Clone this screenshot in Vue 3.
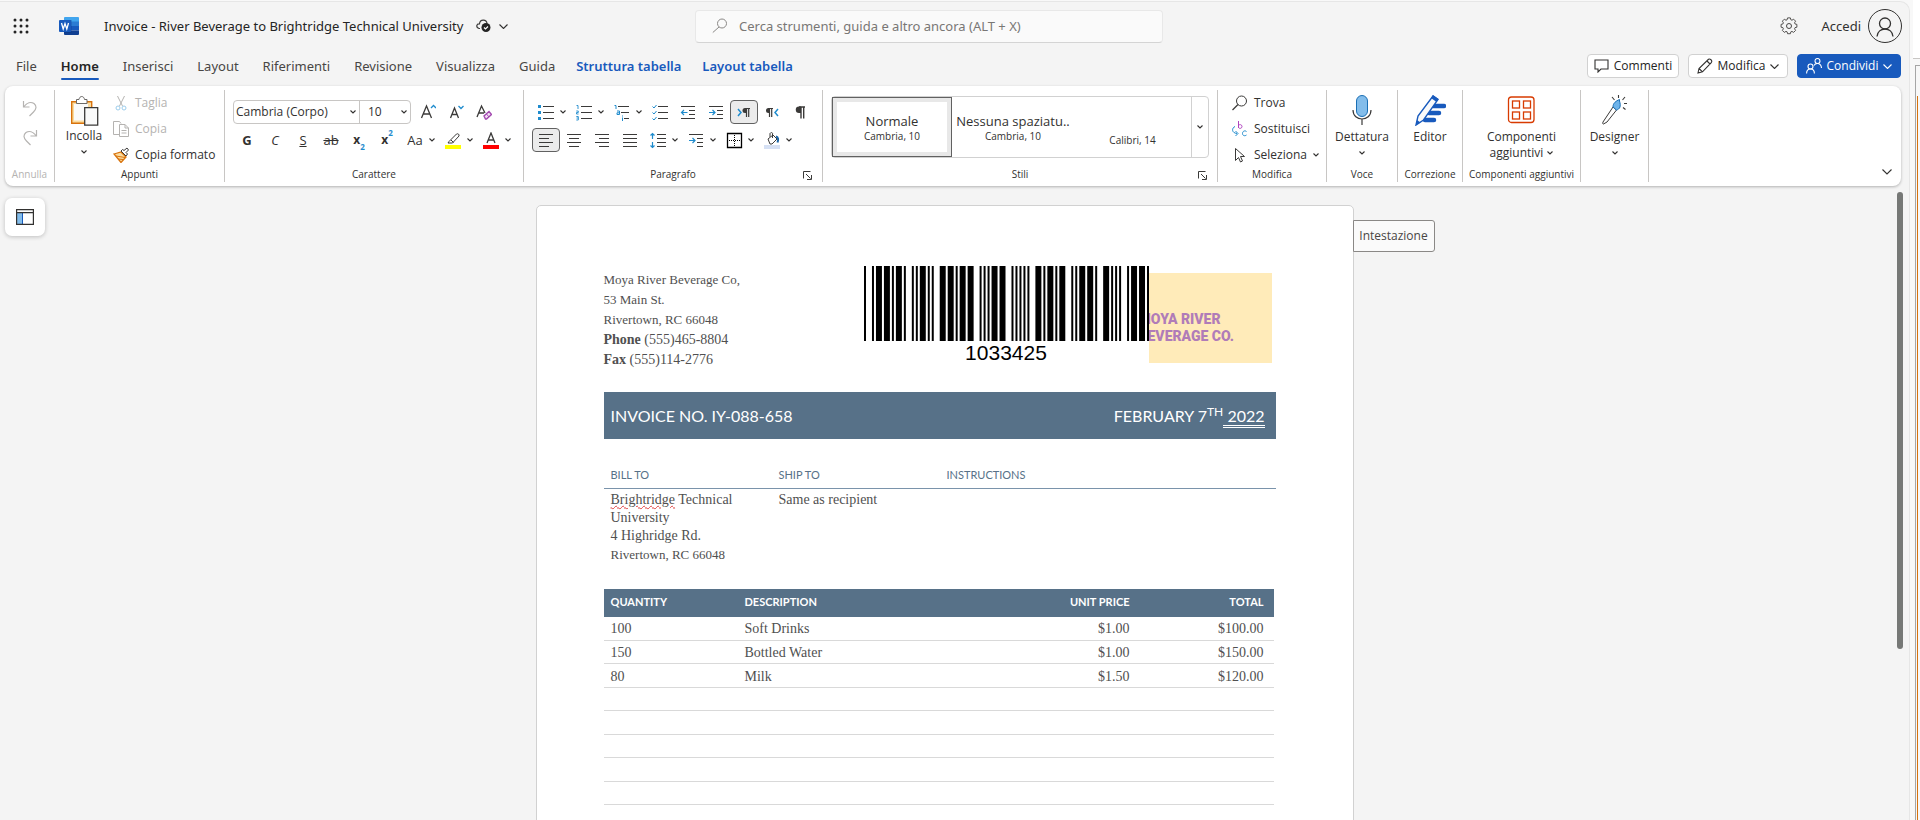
<script setup>
import { ref } from 'vue'

const ink = '#3b3a39'
const blue = '#1e8bcd'

const lines = (rows, extra = '') =>
  `<path d="${rows.map(([x1, x2, y]) => `M${x1} ${y}H${x2}`).join('')}" stroke="${ink}"/>${extra}`

const icons = {
  undo: `<path d="M1.500 1v6h6M2 6.500C5 2.500 9 1.500 12 3.500c3 2.500 2.500 5.500-.500 8.500L7.500 16" stroke="#b5b3b1" stroke-width="1.200"/>`,
  redo: `<path d="M14.500 1v6h-6M14 6.500C11 2.500 7 1.500 4 3.500c-3 2.500-2.500 5.500.500 8.500L8.500 16" stroke="#b5b3b1" stroke-width="1.200"/>`,
  cut: `<path d="M4.500 1l5 10M11.500 1l-5 10" stroke="#b5b3b1"/><circle cx="5" cy="13" r="2" stroke="#9dcdeb"/><circle cx="11" cy="13" r="2" stroke="#9dcdeb"/>`,
  copy: `<path d="M6 13.500H.500V.500h6l1.500 2M6.500 3.500h5.500l3.500 3.500v8.500h-9zM12 3.500V7h3.500M8.500 9.500h5M8.500 12h5" stroke="#b5b3b1"/>`,
  brush: `<path d="M1 7l7-2 5 5-5 5.500z" fill="#fbdc9f" stroke="#d8720c" stroke-width="1.300"/><path d="M3 9l9 1.500M5 12l5 .500" stroke="#d8720c"/><path d="M8 4l5 5 1.500-2-1.500-1.500L15.500 3 14 1 11 3.500 9.500 2.500z" fill="#fff" stroke="${ink}"/>`,
  grow: `<path d="M1.500 14L6.500 2l5 12M3.500 10h6" stroke="${ink}" stroke-width="1.300"/><path d="M11 4l2.500-2.500L16 4" stroke="${blue}" stroke-width="1.300"/>`,
  shrink: `<path d="M2.500 14L6.500 4l4 10M4 10.500h5" stroke="${ink}" stroke-width="1.300"/><path d="M10.500 2L13 4.500 15.500 2" stroke="${blue}" stroke-width="1.300"/>`,
  clear: `<path d="M1 13L5.500 2 9 9M3 9h5" stroke="${ink}" stroke-width="1.300"/><path d="M8 12l5-4.500 2.500 3-5 4.500h-1z" fill="#f3dff5" stroke="#a349b0" stroke-width="1.400"/><path d="M10.500 10l2.500 3" stroke="#a349b0"/>`,
  highlight: `<path d="M4 9.500L11.500 2c1.500-.800 3 .500 2.500 2L7.500 11H3z M6 8l2.500 2.500" stroke="${ink}" fill="#fff"/><path d="M0 13h16v4H0z" fill="#ff0"/>`,
  color: `<path d="M4 11L8 1l4 10M5.500 8h5" stroke="${ink}" stroke-width="1.300"/><path d="M0 13h16v4H0z" fill="#f00"/>`,
  bullets: lines([[5, 16, 2.5], [5, 16, 8.5], [5, 16, 14.5]], `<path d="M0 1h3v3H0zM0 7h3v3H0zM0 13h3v3H0z" fill="${blue}"/>`),
  numbers: lines([[5, 16, 2.5], [5, 16, 8.5], [5, 16, 14.5]], `<path d="M.500 1.500H2V5M.300 7h2v1.500H.500V10h2M.300 12.500h2v3.500h-2M.500 14h2" stroke="${blue}" stroke-width=".900"/>`),
  multi: lines([[4, 15, 2.5], [7, 15, 8.5], [10, 15, 14.5]], `<path d="M.500 1.500H2V5M3 7h2.500v3.500H3V8.800h2.500M8.500 13.500V17M8.500 11.500v1" stroke="${blue}" stroke-width="1"/>`),
  checks: lines([[6, 16, 2.5], [6, 16, 8.5], [6, 16, 14.5]], `<path d="M.500 2.500L2 4l2.500-3M.500 8.500L2 10l2.500-3M.500 14.500L2 16l2.500-3" stroke="${blue}"/>`),
  outdent: lines([[1, 15, 2.5], [9, 15, 6.5], [9, 15, 10.5], [1, 15, 14.5]], `<path d="M7.500 8.500H1.500M4 6L1.500 8.500 4 11" stroke="${blue}" stroke-width="1.200"/>`),
  indent: lines([[1, 15, 2.5], [9, 15, 6.5], [9, 15, 10.5], [1, 15, 14.5]], `<path d="M1 8.500h6M4.500 6L7 8.500 4.500 11" stroke="${blue}" stroke-width="1.200"/>`),
  ltr: `<path d="M2 5l3 3.500L2 12" stroke="${blue}" stroke-width="1.500"/><path d="M14 4.500H9.500M10.500 4.500V13M12.700 4.500V13" stroke="${ink}" stroke-width="1.200"/><path d="M10.500 4H9a2.500 2.500 0 000 5h1.500z" fill="${ink}"/>`,
  rtl: `<path d="M14 5l-3 3.500 3 3.500" stroke="${blue}" stroke-width="1.500"/><path d="M9 4.500H4.500M5.500 4.500V13M7.700 4.500V13" stroke="${ink}" stroke-width="1.200"/><path d="M5.500 4H4.500a2.500 2.500 0 000 5h1z" fill="${ink}"/>`,
  marks: `<path d="M13 3H7M9 3v11.500M11.700 3v11.500" stroke="${ink}" stroke-width="1.400"/><path d="M9 2.500H7a3 3 0 000 6.500h2z" fill="${ink}"/>`,
  left: lines([[1, 15, 2.5], [1, 11, 6.5], [1, 15, 10.5], [1, 11, 14.5]]),
  center: lines([[1, 15, 2.5], [3, 13, 6.5], [1, 15, 10.5], [3, 13, 14.5]]),
  right: lines([[1, 15, 2.5], [5, 15, 6.5], [1, 15, 10.5], [5, 15, 14.5]]),
  justify: lines([[1, 15, 2.5], [1, 15, 6.5], [1, 15, 10.5], [1, 15, 14.5]]),
  spacing: lines([[7, 16, 2.5], [7, 16, 6.5], [7, 16, 10.5], [7, 16, 14.5]], `<path d="M2.500 2v5M.500 3.500l2-2 2 2M2.500 10v6M.500 13.500l2 2 2-2" stroke="${blue}" stroke-width="1.200"/>`),
  special: lines([[1, 15, 2.5], [9, 15, 6.5], [9, 15, 10.5], [9, 15, 14.5]], `<path d="M1 8.500h6M4.500 6L7 8.500 4.500 11" stroke="${blue}" stroke-width="1.200"/>`),
  borders: `<path d="M1.500 1.500h14v14h-14z" stroke="#000" stroke-width="1.300"/><path d="M8.500 3v11M3 8.500h11" stroke="#000" stroke-dasharray="1 1"/>`,
  fill: `<path d="M4 7l5-4 4 4-5 5h-2zM6 5V1.500C7 0 9 .500 8.500 2v4" stroke="${ink}" fill="#fff"/><path d="M12 4.500c2.500.500 2.500 3 1.500 6" stroke="#1b66a8" stroke-width="2"/><path d="M0 13h16v4H0z" fill="#d5e0f4"/>`,
  find: `<circle cx="9.500" cy="6" r="5" stroke="${ink}"/><path d="M6 9.500L.500 15" stroke="${ink}" stroke-width="1.200"/>`,
  replace: `<path d="M6.500 0v7M6.500 4.500c1-1.500 3.500-1 3.500 1s-2.500 2.500-3.500 1" stroke="#b144c0"/><path d="M14.500 10.500c-2-1.500-4 0-4 2s2 3 4 1.500M3 5.500C-.500 7-.500 12 5 12.500M3.500 10L6 12.500 3.500 15" stroke="${blue}"/>`,
  select: `<path d="M3.500 1.500v12l3-3 2 4.500 2-1-2-4.500h4z" stroke="${ink}"/>`,
}

const tabs = ['File', 'Home', 'Inserisci', 'Layout', 'Riferimenti', 'Revisione', 'Visualizza', 'Guida']
const contextTabs = ['Struttura tabella', 'Layout tabella']
const activeTab = ref('Home')

const paragraphRows = [
  [
    { icon: 'bullets', label: 'Elenchi puntati', split: true },
    { icon: 'numbers', label: 'Elenchi numerati', split: true },
    { icon: 'multi', label: 'Elenco a più livelli', split: true },
    { icon: 'checks', label: 'Elenco di controllo' },
    { icon: 'outdent', label: 'Riduci rientro' },
    { icon: 'indent', label: 'Aumenta rientro' },
    { icon: 'ltr', label: 'Da sinistra a destra', on: true },
    { icon: 'rtl', label: 'Da destra a sinistra' },
    { icon: 'marks', label: 'Mostra segni' },
  ],
  [
    { icon: 'left', label: 'Allinea a sinistra', on: true },
    { icon: 'center', label: 'Centra' },
    { icon: 'right', label: 'Allinea a destra' },
    { icon: 'justify', label: 'Giustifica' },
    { icon: 'spacing', label: 'Interlinea', split: true },
    { icon: 'special', label: 'Rientro speciale', split: true },
    { icon: 'borders', label: 'Bordi', split: true },
    { icon: 'fill', label: 'Sfondo', split: true },
  ],
]

const searchText = ref('')

const code39 = {
  '*': 'nwnnwnwnn', 0: 'nnnwwnwnn', 1: 'wnnwnnnnw', 2: 'nnwwnnnnw',
  3: 'wnwwnnnnn', 4: 'nnnwwnnnw', 5: 'wnnwwnnnn',
}
const barcodeValue = '1033425'
const bars = []
let cursor = 0
for (const ch of `*${barcodeValue}*`) {
  ;[...code39[ch]].forEach((kind, i) => {
    const w = kind === 'w' ? 3 : 1
    if (i % 2 === 0) bars.push({ x: cursor, w })
    cursor += w
  })
  cursor += 1
}
const barcodeWidth = cursor - 1

const items = [
  ['100', 'Soft Drinks', '$1.00', '$100.00'],
  ['150', 'Bottled Water', '$1.00', '$150.00'],
  ['80', 'Milk', '$1.50', '$120.00'],
  ...Array.from({ length: 7 }, () => ['', '', '', '']),
]
</script>

<template>
  <div class="desktop">
    <div class="app">
      <header class="titlebar">
        <button class="plain waffle" aria-label="Avvio app">
          <svg width="16" height="16" viewBox="0 0 16 16">
            <template v-for="r in 3" :key="r">
              <circle v-for="c in 3" :key="c" :cx="c * 6 - 4" :cy="r * 6 - 4" r="1.500" fill="#242424" />
            </template>
          </svg>
        </button>
        <svg class="word" width="20" height="18" viewBox="0 0 20 18">
          <path d="M6 0h13a1 1 0 011 1v4H5V1a1 1 0 011-1z" fill="#41a5ee" />
          <path d="M5 4.500h15V9H5z" fill="#2b7cd3" />
          <path d="M5 9h15v4.500H5z" fill="#185abd" />
          <path d="M5 13.500h15V17a1 1 0 01-1 1H6a1 1 0 01-1-1z" fill="#103f91" />
          <path d="M5 3h7.500v13H5z" fill="#0b3a84" opacity=".500" />
          <rect y="3" width="12" height="12" rx="1" fill="#185abd" />
          <path d="M2.500 6l1.700 6L6 6.500 7.800 12l1.700-6" stroke="#fff" stroke-width="1.300" fill="none" />
        </svg>
        <h1>Invoice - River Beverage to Brightridge Technical University</h1>
        <svg class="cloud" width="15" height="14" viewBox="0 0 15 14" fill="none">
          <path d="M4 9.500H3C-.500 8.500.500 4.500 3.500 4.800 4 0 10.500 0 11 4.500" stroke="#3b3a39" stroke-width="1.200" />
          <circle cx="10" cy="8.500" r="4.500" fill="#242424" />
          <path d="M8 8.500l1.500 1.500L12 7.500" stroke="#fff" stroke-width="1.200" />
        </svg>
        <svg class="chev" width="9" height="5" viewBox="0 0 9 5"><path d="M.500.500l4 4 4-4" /></svg>
        <label class="search">
          <svg width="16" height="16" viewBox="0 0 16 16" fill="none" stroke="#8a8886">
            <circle cx="10" cy="5.500" r="4.500" /><path d="M7 9L.800 14.500" />
          </svg>
          <input v-model="searchText" aria-label="Cerca" placeholder="Cerca strumenti, guida e altro ancora (ALT + X)" />
        </label>
        <button class="plain gear" aria-label="Impostazioni">
          <svg width="18" height="18" viewBox="0 0 18 18" fill="none" stroke="#484644">
            <path d="M7.500 1.500h3l.500 2 1.200.500 1.800-1.100 2.100 2.100-1.100 1.800.500 1.200 2 .500v3l-2 .500-.500 1.200 1.100 1.800-2.100 2.100-1.800-1.100-1.200.500-.500 2h-3l-.500-2-1.200-.500-1.800 1.100L1.900 15 3 13.200 2.500 12l-2-.500v-3l2-.500L3 6.800 1.900 5 4 2.900 5.800 4 7 3.500z" stroke-linejoin="round" transform="translate(.600 -.500) scale(.930)" />
            <circle cx="9" cy="9" r="2.500" />
          </svg>
        </button>
        <button class="plain account">
          Accedi
          <svg width="34" height="34" viewBox="0 0 34 34" fill="none" stroke="#323130">
            <circle cx="17" cy="17" r="16.500" />
            <circle cx="17" cy="14.500" r="5.500" stroke-width="1.300" />
            <path d="M9 27.500c.500-10 15.500-10 16 0" stroke-width="1.300" />
          </svg>
        </button>
      </header>

      <nav class="tabs" aria-label="Schede">
        <button v-for="t in tabs" :key="t" class="plain tab" :class="{ active: t === activeTab }" @click="activeTab = t">{{ t }}</button>
        <button v-for="t in contextTabs" :key="t" class="plain tab context" @click="activeTab = t">{{ t }}</button>
        <div class="actions">
          <button class="action comments">
            <svg width="15" height="14" viewBox="0 0 15 14" fill="none" stroke="#323130" stroke-width="1.100">
              <path d="M1 1h13v9H7l-3 3v-3H1z" />
            </svg>
            Commenti
          </button>
          <button class="action edit">
            <svg width="16" height="16" viewBox="0 0 16 16" fill="none" stroke="#323130" stroke-width="1.100">
              <path d="M1 15l1-4.500L11.500 1.300c1.500-1 4 1.200 3 3L5.500 13.800zM10 3l3 3M2 10.500l3.500 3.300" />
            </svg>
            Modifica
            <svg class="chev" width="9" height="5" viewBox="0 0 9 5"><path d="M.500.500l4 4 4-4" /></svg>
          </button>
          <button class="action share">
            <svg width="16" height="16" viewBox="0 0 16 16" fill="none" stroke="#fff" stroke-width="1.100">
              <circle cx="4.500" cy="8.500" r="2.500" /><path d="M.600 15.500c0-6 7.800-6 7.800 0" />
              <circle cx="11.500" cy="3" r="2.500" /><path d="M8 7.500c1.500-3 7-3 7.500 2.500" />
            </svg>
            Condividi
            <svg class="chev" width="9" height="5" viewBox="0 0 9 5"><path d="M.500.500l4 4 4-4" /></svg>
          </button>
        </div>
      </nav>

      <section class="ribbon" aria-label="Barra multifunzione">
        <div class="group undo">
          <div class="body stack">
            <button class="plain" aria-label="Annulla digitazione" disabled><svg width="16" height="17" viewBox="0 0 16 17" fill="none" v-html="icons.undo" /></button>
            <button class="plain" aria-label="Ripeti" disabled><svg width="16" height="17" viewBox="0 0 16 17" fill="none" v-html="icons.redo" /></button>
          </div>
          <div class="caption dim">Annulla</div>
        </div>

        <div class="group clipboard">
          <div class="body row">
            <button class="plain big paste">
              <svg width="30" height="32" viewBox="0 0 30 32" fill="none">
                <path d="M2.700 6.700h20v21.500h-20z" fill="#fbdc9f" stroke="#d8720c" stroke-width="1.400" />
                <path d="M5 9h14v16.500H5z" fill="#fafafa" />
                <path d="M7.500 8.500V4.500H10c.500-4 5-4 5.500 0H18v4z" fill="#fff" stroke="#6b6967" />
                <path d="M15.700 12.700h13v17.500h-13z" fill="#fafafa" stroke="#3b3a39" stroke-width="1.300" />
              </svg>
              Incolla
              <svg class="caret" width="6" height="4" viewBox="0 0 6 4"><path d="M.500.500L3 3 5.500.500" /></svg>
            </button>
            <div class="list">
              <button class="plain item dim" disabled><svg width="16" height="16" viewBox="0 0 16 16" fill="none" v-html="icons.cut" />Taglia</button>
              <button class="plain item dim" disabled><svg width="16" height="16" viewBox="0 0 16 16" fill="none" v-html="icons.copy" />Copia</button>
              <button class="plain item"><svg width="16" height="16" viewBox="0 0 16 16" fill="none" v-html="icons.brush" />Copia formato</button>
            </div>
          </div>
          <div class="caption">Appunti</div>
        </div>

        <div class="group font">
          <div class="body tools">
            <div class="toolrow">
              <div class="combo">
                <span class="field family"><select aria-label="Tipo di carattere"><option>Cambria (Corpo)</option></select><svg class="caret" width="6" height="4" viewBox="0 0 6 4"><path d="M.500.500L3 3 5.500.500" /></svg></span>
                <span class="field size"><select aria-label="Dimensione carattere"><option>10</option></select><svg class="caret" width="6" height="4" viewBox="0 0 6 4"><path d="M.500.500L3 3 5.500.500" /></svg></span>
              </div>
              <button class="plain tool" aria-label="Aumenta dimensione"><svg width="16" height="17" viewBox="0 0 16 17" fill="none" v-html="icons.grow" /></button>
              <button class="plain tool" aria-label="Riduci dimensione"><svg width="16" height="17" viewBox="0 0 16 17" fill="none" v-html="icons.shrink" /></button>
              <button class="plain tool" aria-label="Cancella formattazione"><svg width="16" height="17" viewBox="0 0 16 17" fill="none" v-html="icons.clear" /></button>
            </div>
            <div class="toolrow">
              <button class="plain tool"><b>G</b></button>
              <button class="plain tool"><i>C</i></button>
              <button class="plain tool"><u>S</u></button>
              <button class="plain tool"><s>ab</s></button>
              <button class="plain tool script"><b>x</b><sub>2</sub></button>
              <button class="plain tool script"><b>x</b><sup>2</sup></button>
              <button class="plain tool split"><span class="glyph">Aa</span><svg class="caret" width="6" height="4" viewBox="0 0 6 4"><path d="M.500.500L3 3 5.500.500" /></svg></button>
              <button class="plain tool split" aria-label="Evidenziatore"><span class="glyph"><svg width="16" height="17" viewBox="0 0 16 17" fill="none" v-html="icons.highlight" /></span><svg class="caret" width="6" height="4" viewBox="0 0 6 4"><path d="M.500.500L3 3 5.500.500" /></svg></button>
              <button class="plain tool split" aria-label="Colore carattere"><span class="glyph"><svg width="16" height="17" viewBox="0 0 16 17" fill="none" v-html="icons.color" /></span><svg class="caret" width="6" height="4" viewBox="0 0 6 4"><path d="M.500.500L3 3 5.500.500" /></svg></button>
            </div>
          </div>
          <div class="caption">Carattere</div>
        </div>

        <div class="group para">
          <div class="body tools">
            <div v-for="(row, i) in paragraphRows" :key="i" class="toolrow">
              <button v-for="b in row" :key="b.icon" class="plain tool" :class="{ split: b.split, on: b.on }" :aria-label="b.label">
                <span class="glyph"><svg width="17" height="17" viewBox="0 0 17 17" fill="none" v-html="icons[b.icon]" /></span>
                <svg v-if="b.split" class="caret" width="6" height="4" viewBox="0 0 6 4"><path d="M.500.500L3 3 5.500.500" /></svg>
              </button>
            </div>
          </div>
          <div class="caption">Paragrafo</div>
          <button class="plain launcher" aria-label="Opzioni paragrafo"><svg width="9" height="9" viewBox="0 0 9 9" fill="none" stroke="#3b3a39"><path d="M.500 7.500v-7h7M3 3l4.500 4.500M8.500 4v4.500H4" /></svg></button>
        </div>

        <div class="group styles">
          <div class="body">
            <div class="gallery">
              <button class="plain style chosen"><span>Normale</span><small>Cambria, 10</small></button>
              <button class="plain style second"><span>Nessuna spaziatu..</span><small>Cambria, 10</small></button>
              <button class="plain style third"><small>Calibri, 14</small></button>
              <button class="plain more" aria-label="Altri stili"><svg class="caret" width="6" height="4" viewBox="0 0 6 4"><path d="M.500.500L3 3 5.500.500" /></svg></button>
            </div>
          </div>
          <div class="caption">Stili</div>
          <button class="plain launcher" aria-label="Opzioni stili"><svg width="9" height="9" viewBox="0 0 9 9" fill="none" stroke="#3b3a39"><path d="M.500 7.500v-7h7M3 3l4.500 4.500M8.500 4v4.500H4" /></svg></button>
        </div>

        <div class="group editing">
          <div class="body">
            <div class="list">
              <button class="plain item"><svg width="16" height="16" viewBox="0 0 16 16" fill="none" v-html="icons.find" />Trova</button>
              <button class="plain item"><svg width="16" height="16" viewBox="0 0 16 16" fill="none" v-html="icons.replace" />Sostituisci</button>
              <button class="plain item"><svg width="16" height="16" viewBox="0 0 16 16" fill="none" v-html="icons.select" />Seleziona<svg class="caret" width="6" height="4" viewBox="0 0 6 4"><path d="M.500.500L3 3 5.500.500" /></svg></button>
            </div>
          </div>
          <div class="caption">Modifica</div>
        </div>

        <div class="group voice">
          <div class="body">
            <button class="plain big">
              <svg width="30" height="32" viewBox="0 0 30 32" fill="none">
                <rect x="9.500" y="1.500" width="11" height="21" rx="5.500" fill="#83bdeb" stroke="#1a6fb5" />
                <path d="M6 16c0 12 18 12 18 0M15 25.500V31" stroke="#3b3a39" stroke-width="1.200" />
              </svg>
              Dettatura
              <svg class="caret" width="6" height="4" viewBox="0 0 6 4"><path d="M.500.500L3 3 5.500.500" /></svg>
            </button>
          </div>
          <div class="caption">Voce</div>
        </div>

        <div class="group proof">
          <div class="body">
            <button class="plain big">
              <svg width="32" height="32" viewBox="0 0 32 32" fill="none">
                <path d="M19 12h11M15 19h10M11 26h9" stroke="#185abd" stroke-width="4.500" stroke-linecap="round" />
                <path d="M19 2l5 3.500L9.500 26 2 31l2-9z" fill="#fafafa" stroke="#185abd" stroke-width="1.400" />
                <path d="M19 1l5.500 4-2 3L17 4zM2 31l1-5 3.500 2.500z" fill="#185abd" />
              </svg>
              Editor
            </button>
          </div>
          <div class="caption">Correzione</div>
        </div>

        <div class="group addins">
          <div class="body">
            <button class="plain big">
              <svg width="30" height="32" viewBox="0 0 30 32" fill="none" stroke="#d83b01" stroke-width="1.300">
                <rect x="1.500" y="3" width="25.500" height="25.500" rx="3" />
                <rect x="5.500" y="7" width="7" height="7" /><rect x="16.500" y="7" width="7" height="7" />
                <rect x="5.500" y="18" width="7" height="7" /><rect x="16.500" y="18" width="7" height="7" />
              </svg>
              Componenti
              <span class="second-line">aggiuntivi <svg class="caret" width="6" height="4" viewBox="0 0 6 4"><path d="M.500.500L3 3 5.500.500" /></svg></span>
            </button>
          </div>
          <div class="caption">Componenti aggiuntivi</div>
        </div>

        <div class="group designer">
          <div class="body">
            <button class="plain big">
              <svg width="30" height="32" viewBox="0 0 30 32" fill="none">
                <path d="M13 13l3.500 3L7 28l-3.500 2c-.800 0-1-.500-.500-2z" stroke="#3b3a39" fill="#fff" />
                <path d="M13 13c0-4 3-6 6.500-7.500-.500 2 1.500 4 .500 7.500-.800 2-2 2.500-3.500 3z" fill="#6fb4ea" stroke="#1a6fb5" />
                <path d="M18.500 1v3M12 3l2.500 3M25 3l-2.500 3M27 9.500h-3M25.500 15.500L23 13.500" stroke="#3b3a39" stroke-width="1.100" />
              </svg>
              Designer
              <svg class="caret" width="6" height="4" viewBox="0 0 6 4"><path d="M.500.500L3 3 5.500.500" /></svg>
            </button>
          </div>
        </div>

        <button class="plain collapse" aria-label="Comprimi barra"><svg class="chev" width="10" height="6" viewBox="0 0 10 6"><path d="M.500.500L5 5 9.500.500" /></svg></button>
      </section>

      <main class="workspace">
        <aside class="side">
          <button class="navpane" aria-label="Riquadro di spostamento">
            <svg width="18" height="16" viewBox="0 0 18 16" fill="none">
              <path d="M1 4h5.500v11H1z" fill="#83bdeb" /><path d="M6.500 4v11" stroke="#185abd" />
              <path d="M.600.600h16.800v14.800H.600zM.600 3.600h16.800" stroke="#323130" stroke-width="1.200" />
            </svg>
          </button>
        </aside>
        <div class="canvas">
          <article class="page">
            <div class="letterhead">
              <address>
                Moya River Beverage Co,<br />53 Main St.<br />Rivertown, RC 66048
                <p><b>Phone</b> (555)465-8804<br /><b>Fax</b> (555)114-2776</p>
              </address>
              <figure class="barcode">
                <svg :viewBox="`0 0 ${barcodeWidth} 38`" preserveAspectRatio="none" role="img" aria-label="Codice a barre">
                  <rect v-for="b in bars" :key="b.x" :x="b.x" y="0" :width="b.w" height="38" fill="#000" />
                </svg>
                <figcaption>{{ barcodeValue }}</figcaption>
              </figure>
              <div class="brand"><p>MOYA RIVER<br />BEVERAGE CO.</p></div>
            </div>

            <div class="banner">
              <span>INVOICE NO. IY-088-658</span>
              <span class="date">FEBRUARY 7<sup>TH</sup><span class="year">&nbsp;2022</span></span>
            </div>

            <table class="parties">
              <thead><tr><th>BILL TO</th><th>SHIP TO</th><th>INSTRUCTIONS</th></tr></thead>
              <tbody>
                <tr>
                  <td>
                    <p class="tight"><span class="misspelt">Brightridge</span> Technical<br />University<br />4 Highridge Rd.</p>
                    <p>Rivertown, RC 66048</p>
                  </td>
                  <td><p class="tight">Same as recipient</p></td>
                  <td></td>
                </tr>
              </tbody>
            </table>

            <table class="goods">
              <colgroup><col class="c1" /><col class="c2" /><col class="c3" /><col class="c4" /></colgroup>
              <thead><tr><th>QUANTITY</th><th>DESCRIPTION</th><th class="num">UNIT PRICE</th><th class="num">TOTAL</th></tr></thead>
              <tbody>
                <tr v-for="(item, i) in items" :key="i">
                  <td v-for="(cell, j) in item" :key="j" :class="{ num: j > 1 }">{{ cell }}</td>
                </tr>
              </tbody>
            </table>
          </article>
          <button class="headertag">Intestazione</button>
        </div>
        <div class="scrollbar"></div>
      </main>
    </div>
    <div class="neighbour"><div class="neighbour-top"></div><div class="neighbour-body"><div class="neighbour-edge"></div></div></div>
  </div>
</template>

<style>
body { margin: 0; background: #f4f4f4; }
</style>

<style scoped>
.desktop { display: flex; height: 100vh; overflow: hidden; background: #f8f8f8; font: 12px/16px "Open Sans", "Noto Sans", sans-serif; color: #323130; }
.desktop * { box-sizing: border-box; }
.app { flex: 1; min-width: 0; display: flex; flex-direction: column; margin-top: 1px; border: solid #e6e6e6; border-width: 1px 1px 0 0; border-radius: 0 10px 0 0; background: #f4f4f4; }
.plain { margin: 0; padding: 0; border: 0; background: none; font: inherit; color: inherit; }
svg { flex: none; display: block; }
.chev path, .caret path { fill: none; stroke: #323130; stroke-width: 1.100; }

.titlebar { display: flex; align-items: center; height: 48px; padding: 0 7px 0 13px; font: 13px/20px "Noto Sans", "Open Sans", sans-serif; }
.word { margin-left: 30px; }
h1 { margin: 0 0 0 25px; width: 364px; font-size: 13px; line-height: 20px; font-weight: 400; white-space: nowrap; color: #242424; }
.cloud { margin-left: 8px; }
.titlebar > .chev { margin-left: 8px; }
.search { flex: 0 1 468px; display: flex; align-items: center; gap: 11px; height: 33px; margin-left: 187px; padding-left: 16px; background: #fafafa; border: 1px solid #e8e8e8; border-bottom-color: #d4d4d4; border-radius: 4px; }
.search input { flex: 1; min-width: 0; padding: 0; border: 0; outline: 0; background: none; font: inherit; }
.search input::placeholder { color: #797775; opacity: 1; }
.gear { margin-left: auto; }
.account { display: flex; align-items: center; gap: 7px; margin-left: 24px; }

.tabs { display: flex; align-items: flex-start; gap: 24px; height: 36px; padding: 1px 8px 0 16px; }
.tab { position: relative; height: 29px; font: 13px/20px "Noto Sans", "Open Sans", sans-serif; white-space: nowrap; color: #484644; }
.tab.active { font-weight: 600; color: #242424; }
.tab.active::after { content: ""; position: absolute; left: 0; right: 0; bottom: 0; height: 2px; border-radius: 1px; background: #185abd; }
.tab.context { margin-left: -3px; font-weight: 600; color: #185abd; }
.actions { display: flex; gap: 9px; margin: 3px 0 0 auto; }
.action { display: flex; align-items: center; justify-content: center; gap: 5px; height: 24px; padding: 0; border: 1px solid #d1d1d1; border-radius: 4px; background: #fff; font: inherit; color: #242424; }
.comments { width: 92px; }
.edit { width: 100px; }
.share { width: 104px; border-color: #185abd; background: #185abd; color: #fff; }
.share .chev path { stroke: #fff; }

.ribbon { position: relative; z-index: 1; display: flex; height: 100px; margin: 0 8px 0 5px; padding: 4px 0; border-radius: 8px; background: #fff; box-shadow: 0 1px 3px rgba(0, 0, 0, .28); }
.group { position: relative; flex: none; display: flex; flex-direction: column; border-right: 1px solid #c8c6c4; }
.body { height: 76px; }
.caption { font-size: 10px; line-height: 16px; text-align: center; white-space: nowrap; }
.dim { color: #b5b3b1; }
.undo { width: 50px; }
.clipboard { width: 170px; }
.font, .para { width: 299px; }
.styles { width: 395px; }
.editing { width: 109px; }
.voice { width: 71px; }
.proof { width: 65px; }
.addins { width: 118px; }
.designer { width: 68px; }
.stack { display: flex; flex-direction: column; align-items: center; gap: 12px; padding-top: 10px; }
.row { display: flex; align-items: flex-start; }
.big { display: flex; flex-direction: column; align-items: center; width: 100%; padding-top: 4px; line-height: 16px; }
.big > svg:first-child { margin-bottom: 3px; }
.big > .caret { margin-top: 6px; }
.paste { width: 58px; padding-top: 5px; }
.paste > svg:first-child { margin-bottom: 1px; }
.second-line { display: flex; align-items: center; gap: 4px; }
.list { display: flex; flex-direction: column; }
.item { display: flex; align-items: center; gap: 6px; height: 26px; white-space: nowrap; }
.item.dim { color: #b5b3b1; }
.editing .list { padding-left: 14px; }
.tools { padding: 8px 0 0 8px; }
.toolrow { display: flex; align-items: center; height: 28px; }
.combo { display: flex; width: 178px; height: 24px; margin-right: 3px; border: 1px solid #c8c6c4; border-radius: 4px; }
.field { position: relative; display: flex; align-items: center; }
.field select { appearance: none; width: 100%; height: 100%; padding: 0 0 0 2px; border: 0; background: none; font: inherit; color: inherit; }
.field .caret { position: absolute; right: 3px; pointer-events: none; }
.family { flex: 1; border-right: 1px solid #c8c6c4; }
.size { width: 50px; }
.size select { padding-left: 8px; }
.tool { display: flex; align-items: center; justify-content: center; width: 28px; height: 24px; font-size: 13px; }
.tool.split { width: 38px; justify-content: flex-start; }
.glyph { display: flex; justify-content: center; width: 28px; }
.tool.on { border: 1px solid #616161; border-radius: 4px; background: #ebebeb; }
.script { font-size: 12px; }
.script sub, .script sup { font-size: 8px; line-height: 10px; color: #1e8bcd; font-weight: 700; }
.script sub { align-self: flex-end; }
.script sup { align-self: flex-start; }
.launcher { position: absolute; right: 10px; bottom: 2px; }
.gallery { display: flex; height: 62px; margin: 6px 8px 0 8px; border: 1px solid #d1d1d1; border-radius: 4px; }
.style { display: flex; flex-direction: column; align-items: center; justify-content: center; height: 60px; padding-top: 2px; }
.style span { font-size: 13px; line-height: 16px; white-space: nowrap; }
.style small { font-size: 10px; line-height: 14px; }
.chosen { width: 120px; border: 1px solid #616161; box-shadow: inset 0 0 0 4px #e8e8e8; }
.second { width: 122px; }
.third { flex: 1; padding-top: 26px; }
.more { display: flex; align-items: center; justify-content: center; width: 17px; border-left: 1px solid #d1d1d1; }
.collapse { align-self: flex-end; margin: 0 9px 7px auto; }

.workspace { flex: 1; min-height: 0; display: flex; overflow: hidden; margin-top: -1px; }
.side { flex: none; width: 45px; padding: 13px 0 0 5px; }
.navpane { display: flex; align-items: center; justify-content: center; width: 40px; height: 38px; padding: 0; border: 0; border-radius: 7px; background: #fff; box-shadow: 0 1px 4px rgba(0, 0, 0, .22); }
.canvas { flex: 1; display: flex; justify-content: center; align-items: flex-start; padding: 20px 0 0 28px; }
.page { flex: none; width: 818px; min-height: 1056px; padding: 60px 77px 0 67px; border: 1px solid #d1d1d1; border-radius: 5px; background: #fff; font: 14px/20px "Liberation Serif", serif; color: #505050; }
.headertag { height: 32px; width: 82px; margin: 15px 0 0 -1px; padding: 0; border: 1px solid #8a8886; border-radius: 0 3px 3px 0; background: #fafafa; font: inherit; color: #484644; }
.scrollbar { flex: none; width: 6px; height: 457px; margin: 7px 6px 0 0; border-radius: 3px; background: #767876; }

.letterhead { display: flex; height: 126px; }
address { width: 260px; padding-top: 4px; font-size: 13px; font-style: normal; }
address p { margin: 0; font-size: 14px; }
.barcode { flex: none; width: 285px; margin: 0; text-align: center; color: #000; }
.barcode svg { width: 100%; height: 75px; }
figcaption { font: 21px/24px "Liberation Sans", sans-serif; }
.brand { width: 123px; height: 90px; margin-top: 7px; overflow: hidden; background: #ffebb9; }
.brand p { margin: 38px 0 0 -10px; font: 900 14px/17px Roboto, sans-serif; white-space: nowrap; color: #b07cb8; }
.banner { display: flex; justify-content: space-between; align-items: center; height: 47px; padding: 0 11px 0 7px; background: #577188; font: 16px/24px Lato, sans-serif; color: #fff; }
.banner sup { font-size: 12px; line-height: 0; }
.year { border-bottom: 3px double #fff; }
.parties { width: 100%; margin-top: 27px; border-collapse: collapse; table-layout: fixed; }
.parties th { width: 168px; height: 22px; padding: 0 7px 4px; border-bottom: 1px solid #7a93ab; font: 11px/16px Lato, sans-serif; text-align: left; color: #577188; }
.parties th:last-child { width: auto; }
.parties td { padding: 2px 7px 0; vertical-align: top; font-size: 13px; }
.parties p { margin: 0; }
.parties .tight { font-size: 14px; line-height: 18px; }
.misspelt { text-decoration: underline wavy #e04040 1px; text-underline-offset: 1px; }
.goods { width: 670px; margin-top: 24px; border-collapse: collapse; table-layout: fixed; }
.c1 { width: 134px; }
.c3 { width: 134px; }
.c4 { width: 134px; }
.goods th { height: 28px; padding: 0 7px 2px; background: #577188; font: 700 11px/16px Lato, sans-serif; text-align: left; color: #fff; }
.goods td { height: 24px; padding: 2px 7px 0; border-bottom: 1px solid #d9d9d9; line-height: 20px; }
.goods tr:nth-child(even) td { height: 23px; }
.goods .num { padding-right: 10px; text-align: right; }

.neighbour { flex: none; width: 10px; display: flex; flex-direction: column; }
.neighbour-top { height: 59px; margin-left: 3px; border-bottom: 1px solid #c8c6c4; background: #fff; }
.neighbour-body { flex: 1; margin: 6px 0 0 5px; border: solid #a6a6a6; border-width: 1px 0 0 1px; }
.neighbour-edge { height: 100%; margin: 30px 0 0 1px; border-left: 1px solid #d8720c; }
</style>
